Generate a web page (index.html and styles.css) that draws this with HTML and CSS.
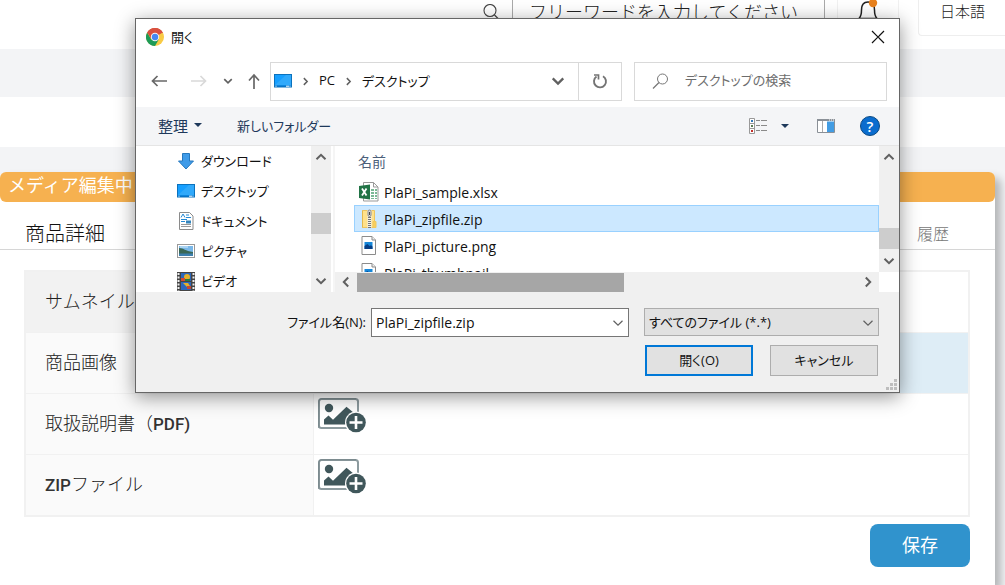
FILE: index.html
```html
<!DOCTYPE html>
<html lang="ja">
<head>
<meta charset="utf-8">
<title>メディア編集</title>
<meta name="viewport" content="width=device-width, initial-scale=1">
<link rel="stylesheet" href="styles.css">
</head>
<body>
<svg class="defs" aria-hidden="true">
  <symbol id="desktop" viewBox="0 0 18 14"><rect x=".5" y=".5" width="17" height="12.5" fill="#169fff" stroke="#0b72bd"/><path d="M1 11 12 1h5v10z" fill="#30a9fb"/><path d="M1 12.2h16" stroke="#0872c4" stroke-width="1.5"/><path d="M1.500 12.2h1M12 12.2h3M15.500 12.2h1" stroke="#fff"/></symbol>
  <symbol id="chev" viewBox="0 0 12 12"><path d="M1.500 3.800 6 8.200l4.500-4.400" fill="none" stroke="currentColor" stroke-width="2"/></symbol>
  <symbol id="thin" viewBox="0 0 12 12"><path d="M1.500 3.800 6 8.200l4.500-4.400" fill="none" stroke="currentColor" stroke-width="1.200"/></symbol>
  <symbol id="addimg" viewBox="0 0 48 36"><rect x="1" y="1" width="39" height="29" rx="2.500" fill="#fff" stroke="#8d9b9f" stroke-width="2"/><path d="M.8 30V3.500A2.700 2.700 0 0 1 3.500.8H38" fill="none" stroke="#758589" stroke-width="1"/><circle cx="11" cy="10" r="4.200" fill="#40575b"/><path d="M6 26.500v-5l4.500-4 4.500 4.200 13.500-13L36 15v11.500z" fill="#40575b"/><circle cx="38" cy="24.500" r="11" fill="#fff"/><circle cx="38" cy="24.500" r="9.800" fill="#40575b"/><path d="M38 18v13M31.500 24.500h13" stroke="#fff" stroke-width="2.600"/></symbol>
  <symbol id="png" viewBox="0 0 16 19"><path d="M1 .5h10L14.500 4v14.500H1z" fill="#fff" stroke="#8b8b8b"/><path d="M11 .5V4h3.500" fill="#eee" stroke="#8b8b8b"/><rect x="3.500" y="6" width="8" height="7" fill="#1687d9"/><path d="M3.500 13v-3l3-2 2 2 1.500-.8 1.500 1.300V13z" fill="#063e86"/></symbol>
</svg>

<header class="site-header">
  <div class="search-mark"><svg width="18" height="18" viewBox="0 0 18 18"><circle cx="8" cy="6.500" r="6" fill="none" stroke="#444" stroke-width="1.100"/><path d="m12.500 11 5 5" stroke="#444" stroke-width="1.200"/></svg></div>
  <input class="site-search" type="text" aria-label="フリーワード検索" placeholder="フリーワードを入力してください">
  <button class="bell" aria-label="お知らせ"><svg width="22" height="24" viewBox="0 0 22 24"><path d="M2 20.500c2-2 2.500-4 2.500-8.500C4.500 6.500 7 4 11 4s6.500 2.500 6.500 8c0 4.500.5 6.500 2.500 8.500z" fill="#fff" stroke="#222" stroke-width="1.500"/><circle cx="16" cy="5" r="4.200" fill="#e8821e"/></svg></button>
  <button class="lang"><span>日本語</span><svg width="10" height="10"><use href="#thin"/></svg></button>
</header>
<div class="band"></div>
<div class="subhead"></div>

<main class="main">
  <section class="card">
    <div class="status">メディア編集中</div>
    <nav class="tabs"><a class="tab active" href="#detail">商品詳細</a><a class="tab" href="#history">履歴</a></nav>
    <div class="body">
      <table class="media">
        <tr class="first"><th scope="row">サムネイル</th><td></td></tr>
        <tr class="picked"><th scope="row">商品画像</th><td></td></tr>
        <tr><th scope="row">取扱説明書（<b>PDF)</b></th><td><button class="add" aria-label="PDFを追加"><svg width="48" height="36"><use href="#addimg"/></svg></button></td></tr>
        <tr><th scope="row"><b>ZIP</b>ファイル</th><td><button class="add" aria-label="ZIPを追加"><svg width="48" height="36"><use href="#addimg"/></svg></button></td></tr>
      </table>
      <button class="save">保存</button>
    </div>
  </section>
</main>

<div class="dialog" role="dialog" aria-label="開く">
  <div class="titlebar">
    <svg width="18" height="18" viewBox="0 0 18 18"><circle cx="9" cy="9" r="9" fill="#f9cb45"/><path d="M9 9 1.200 4.500A9 9 0 0 1 16.800 4.500z" fill="#d95040"/><path d="M1.200 4.500A9 9 0 0 0 9 18l3.900-6.800L9 13 5.100 11.200z" fill="#1e9b57"/><path d="M9 5h7.900A9 9 0 0 0 1.200 4.500L5.200 11z" fill="#d95040"/><circle cx="9" cy="9" r="4.200" fill="#f4f4f4"/><circle cx="9" cy="9" r="3.200" fill="#4587f3"/></svg>
    <span class="title">開く</span>
    <button class="close" aria-label="閉じる"><svg width="14" height="14" viewBox="0 0 14 14"><path d="m1 1 12 12M13 1 1 13" stroke="#111" stroke-width="1.200"/></svg></button>
  </div>
  <div class="navrow">
    <div class="arrows">
      <button aria-label="戻る"><svg width="18" height="18" viewBox="0 0 18 18"><path d="M17 9H2.500M7.500 4l-5 5 5 5" fill="none" stroke="#686868" stroke-width="1.700"/></svg></button>
      <button aria-label="進む"><svg width="18" height="18" viewBox="0 0 18 18"><path d="M1 9h14.500M10.500 4l5 5-5 5" fill="none" stroke="#d9d9d9" stroke-width="1.700"/></svg></button>
      <button aria-label="履歴"><svg width="10" height="10"><use href="#chev"/></svg></button>
      <button aria-label="上へ"><svg width="14" height="18" viewBox="0 0 14 18"><path d="M7 17V3M2 8.500l5-5.500 5 5.500" fill="none" stroke="#686868" stroke-width="1.700"/></svg></button>
    </div>
    <div class="address">
      <svg class="pc" width="18" height="14"><use href="#desktop"/></svg>
      <svg class="right" width="9" height="9"><use href="#chev"/></svg>
      <span class="crumb">PC</span>
      <svg class="right" width="9" height="9"><use href="#chev"/></svg>
      <span class="crumb">デスクトップ</span>
      <button class="drop" aria-label="以前の場所"><svg width="14" height="14"><use href="#chev"/></svg></button>
      <button class="refresh" aria-label="更新"><svg width="16" height="16" viewBox="0 0 16 16"><path d="M11 3.200A6 6 0 1 1 4.500 3.500" fill="none" stroke="#747474" stroke-width="1.900"/><path d="M2 2h4.500v4.500" fill="none" stroke="#747474" stroke-width="1.700"/></svg></button>
    </div>
    <label class="find"><svg width="17" height="17" viewBox="0 0 17 17"><circle cx="10.500" cy="6" r="5" fill="none" stroke="#777"/><path d="m7 9.500-6 6" stroke="#777" stroke-width="1.200"/></svg><input type="text" aria-label="デスクトップの検索" placeholder="デスクトップの検索"></label>
  </div>
  <div class="tools">
    <button class="tool">整理<svg width="8" height="4" viewBox="0 0 8 4"><path d="M0 0h8L4 4z" fill="#1e395b"/></svg></button>
    <button class="tool">新しいフォルダー</button>
    <button class="tool views" aria-label="表示方法"><svg width="18" height="16" viewBox="0 0 18 16"><path d="M.5.500h5v15h-5zM.5 5.500h5M.5 10.500h5" fill="#fff" stroke="#999"/><path d="M2 3h2" stroke="#3579b8" stroke-width="2"/><path d="M2 8h2" stroke="#5c7c53" stroke-width="2"/><path d="M2 13h2" stroke="#c3302b" stroke-width="2"/><path d="M7 2.500h4M12 2.500h6M7 7.500h4M12 7.500h6M7 12.500h4M12 12.500h6" stroke="#8a8a8a"/></svg><svg width="8" height="4" viewBox="0 0 8 4"><path d="M0 0h8L4 4z" fill="#1e395b"/></svg></button>
    <button class="tool preview" aria-label="プレビュー"><svg width="18" height="14" viewBox="0 0 18 14"><path d="M.5.500h17v13H.5z" fill="#fff" stroke="#8a9097"/><path d="M0 1h18" stroke="#8a9097" stroke-width="2"/><path d="M5.500 2v11" stroke="#aaa"/><path d="M10 2.500h7V13h-7z" fill="#429ce3"/><path d="M12 1h1M14 1h1M16 1h1" stroke="#fff"/></svg></button>
    <button class="help" aria-label="ヘルプ">?</button>
  </div>
  <div class="content">
    <ul class="tree">
      <li><svg width="18" height="18" viewBox="0 0 18 18"><path d="M5.500 1.500h7V9h4L9 17 1.500 9h4z" fill="#3f9be8" stroke="#2678be"/></svg><span>ダウンロード</span></li>
      <li><svg width="18" height="14"><use href="#desktop"/></svg><span>デスクトップ</span></li>
      <li><svg width="18" height="18" viewBox="0 0 18 18"><path d="M2.500.500h10L16 4v13.500H2.500z" fill="#fff" stroke="#8b8b8b"/><path d="M4 5.500 6 2l2 3.500M9 3h3M9 5.500h5M4 7.500h6M4 9.500h4" fill="none" stroke="#2489d4"/><path d="M9 8.500h5v3H9z" fill="#3484bb"/><path d="M4 12.500h10M4 14.500h10" stroke="#999"/></svg><span>ドキュメント</span></li>
      <li><svg width="18" height="14" viewBox="0 0 18 14"><rect x=".5" y=".5" width="17" height="13" fill="#fff" stroke="#999"/><path d="M2 2h14v10H2z" fill="#7ab8e9"/><path d="M2 4c5 0 6 3 14 4v2H2z" fill="#3b6856"/><path d="M2 9.500h14V12H2z" fill="#3d7fae"/><path d="M3 3h8" stroke="#d9effc"/></svg><span>ピクチャ</span></li>
      <li><svg width="18" height="19" viewBox="0 0 18 19"><path d="M0 0h18v19H0z" fill="#444"/><path d="M1.500 1v18M16.500 1v18" stroke="#eee" stroke-width="2" stroke-dasharray="2 1.500"/><path d="M4 1h10v8H4zM4 10h10v8H4z" fill="#2c68bc"/><circle cx="10" cy="5" r="3" fill="#e4b22b"/><path d="M4 6h4v3H4z" fill="#d34b30"/><path d="M8 7h5v2H8z" fill="#267d43"/><path d="M6 11h5l2 3-3 1z" fill="#e4b22b"/><path d="M10 14h4v3h-4z" fill="#c54733"/></svg><span>ビデオ</span></li>
    </ul>
    <div class="vbar tree-bar"><svg class="up" width="12" height="12"><use href="#chev"/></svg><i class="thumb"></i><svg width="12" height="12"><use href="#chev"/></svg></div>
    <div class="split"></div>
    <div class="files">
      <div class="listing">
        <div class="colhead">名前</div>
        <div class="file"><svg width="20" height="20" viewBox="0 0 20 20"><path d="M4.500.500h10L19 5v14H4.500z" fill="#fff" stroke="#999"/><path d="M14.500.500V5H19" fill="none" stroke="#999"/><path d="M12 7h3v2h-3zM16 7h2v2h-2zM12 10h3v2h-3zM16 10h2v2h-2zM12 13h3v2h-3zM16 13h2v2h-2zM12 16h3v1h-3zM16 16h2v1h-2z" fill="#7bb895"/><path d="M0 4 11 2.500v15L0 16z" fill="#217346"/><path d="m3 6.500 4.500 7M7.500 6.500l-4.500 7" stroke="#fff" stroke-width="1.800"/></svg><span>PlaPi_sample.xlsx</span></div>
        <div class="file selected"><svg width="20" height="20" viewBox="0 0 20 20"><path d="M3.500 1.500h12v17h-12z" fill="#ffe18a" stroke="#edc45f"/><path d="M14 12.500h3v6h-3z" fill="#f8cf5e" stroke="#f0c860"/><path d="M3.500 1.500v17" stroke="#e3b84e"/><path d="M10.500 1v18" stroke="#f3f0e6" stroke-width="4"/><path d="M10.500 8v11" stroke="#777" stroke-width="3" stroke-dasharray="1 1"/><rect x="9" y="1" width="3" height="6.500" rx="1.500" fill="#ddd" stroke="#888"/><path d="M10.500 3v3" stroke="#444"/></svg><span>PlaPi_zipfile.zip</span></div>
        <div class="file"><svg width="20" height="19"><use href="#png"/></svg><span>PlaPi_picture.png</span></div>
        <div class="file"><svg width="20" height="19"><use href="#png"/></svg><span>PlaPi_thumbnail</span></div>
      </div>
      <div class="vbar file-bar"><svg class="up" width="12" height="12"><use href="#chev"/></svg><i class="thumb"></i><svg width="12" height="12"><use href="#chev"/></svg></div>
      <div class="hbar"><svg class="left" width="12" height="12"><use href="#chev"/></svg><i class="hthumb"></i><svg class="right" width="12" height="12"><use href="#chev"/></svg></div>
    </div>
  </div>
  <div class="footer">
    <label for="fname">ファイル名(N):</label>
    <div class="combo"><input id="fname" type="text" value="PlaPi_zipfile.zip"><svg width="12" height="12"><use href="#thin"/></svg></div>
    <div class="choices">
      <div class="combo kind"><select aria-label="ファイルの種類"><option>すべてのファイル (*.*)</option></select><svg width="12" height="12"><use href="#thin"/></svg></div>
      <div class="actions"><button class="btn primary">開く(O)</button><button class="btn">キャンセル</button></div>
    </div>
  </div>
  <svg class="grip" width="11" height="11" viewBox="0 0 11 11"><path d="M8 0h3v3H8zM4 4h3v3H4zM8 4h3v3H8zM0 8h3v3H0zM4 8h3v3H4zM8 8h3v3H8z" fill="#bdbdbd"/></svg>
</div>
</body>
</html>
```
FILE: styles.css
```css
* { box-sizing: border-box; }
body {
  margin: 0;
  min-height: 100vh;
  display: flex;
  flex-direction: column;
  overflow: hidden;
  position: relative;
  background: #fff;
  color: #222;
  font-family: Roboto, "Noto Sans CJK JP", sans-serif;
  font-weight: 300;
}
button, input, select { font: inherit; color: inherit; margin: 0; padding: 0; border: 0; background: none; border-radius: 0; }
input { min-width: 0; outline: 0; }
svg { display: block; flex: none; }
a { text-decoration: none; color: inherit; }
.defs { position: absolute; width: 0; height: 0; }

.site-header { display: flex; align-items: flex-start; justify-content: flex-end; height: 49px; }
.search-mark { padding: 4px 12px 0 0; height: 36px; border-right: 1px solid #aaa; }
.site-search { width: 312px; height: 36px; padding: 0 16px 12px; border-right: 1px solid #aaa; font-size: 18px; }
.site-search::placeholder { color: #222; opacity: 1; }
.bell { width: 62px; height: 36px; margin: 0 19px 0 12px; border: solid #f1f1f1; border-width: 0 1px; display: flex; justify-content: center; }
.bell svg { margin-top: -2px; }
.lang { width: 87px; height: 36px; padding: 0 0 14px 21px; border: solid #eee; border-width: 0 0 1px 1px; border-bottom-left-radius: 4px; display: flex; align-items: center; gap: 20px; font-size: 15px; overflow: hidden; white-space: nowrap; }
.band { height: 48px; background: #f3f4f6; }
.subhead { height: 50px; }

.main { flex: 1; padding: 25px 10px 0 0; background: #f3f4f6; display: flex; }
.card { flex: 1; background: #fff; border-radius: 6px 6px 0 0; box-shadow: 6px 6px 8px #b4b6b8; }
.status { height: 30px; line-height: 28px; padding-left: 8px; border-radius: 6px; background: #f6b150; color: #fff; font-size: 18px; font-weight: 400; }
.tabs { height: 48px; padding: 14px 46px 0 25px; border-bottom: 1px solid #d6d6d6; display: flex; justify-content: space-between; align-items: center; }
.tab { color: #777; font-size: 16px; }
.tab.active { color: #111; font-size: 20px; }
.body { padding: 20px 25px 0 24px; display: flex; flex-direction: column; align-items: flex-end; gap: 7px; }
.media { width: 100%; border-collapse: separate; border-spacing: 0; border: 2px solid #f1f1f1; }
.media th { width: 288px; height: 61px; padding: 0 0 4px 19px; text-align: left; font-size: 18px; font-weight: 300; background: #fafafa; border: solid #f1f1f1; border-width: 0 1px 1px 0; }
.media b { font-size: 17px; font-weight: 500; color: #333; }
.media td { padding: 4px; vertical-align: top; border-bottom: 1px solid #f1f1f1; }
.media tr:last-child > * { border-bottom: 0; }
.media tr:last-child th { height: 60px; }
.media .first th { background: #f2f2f2; }
.picked td { background: #deedf6; }
.save { width: 100px; height: 43px; padding-bottom: 4px; border-radius: 8px; background: #3093cd; color: #fff; font-size: 18px; font-weight: 400; }

.dialog {
  position: absolute; top: 18px; left: 135px; right: 105px; height: 375px;
  display: flex; flex-direction: column;
  border: 1px solid #666; background: #fff; color: #111;
  box-shadow: 0 4px 18px rgba(0, 0, 0, .42);
  font: 400 13px "Open Sans", "Noto Sans CJK JP", sans-serif;
  font-feature-settings: "palt";
}
.dialog svg { color: #606060; }
.titlebar { display: flex; align-items: center; gap: 7px; height: 36px; padding: 0 14px 0 10px; }
.title, .crumb, .tree span { padding-bottom: 2px; }
.close { margin-left: auto; }
.navrow { display: flex; align-items: center; height: 52px; padding: 0 12px 0 14px; }
.arrows { display: flex; align-items: center; justify-content: space-between; width: 111px; margin-right: 9px; }
.arrows button:nth-child(2) { margin-left: 8px; }
.address { flex: 1; height: 39px; display: flex; align-items: center; border: 1px solid #d9d9d9; gap: 9px; padding-left: 3px; }
.right { transform: rotate(-90deg); }
.up { transform: rotate(180deg); }
.left { transform: rotate(90deg); }
.drop { margin-left: auto; }
.refresh { width: 43px; height: 100%; border-left: 1px solid #d9d9d9; display: grid; place-items: center; margin-left: 4px; }
.find { width: 253px; height: 39px; margin-left: 12px; padding-left: 17px; display: flex; align-items: center; gap: 16px; border: 1px solid #d9d9d9; }
.find input { padding-bottom: 2px; }
.find input::placeholder { color: #6d6d6d; opacity: 1; }
.tools { height: 39px; padding: 0 19px 0 22px; display: flex; align-items: center; background: #f4f5f7; border-bottom: 1px solid #e5e5e5; color: #1e395b; }
.tool { display: flex; align-items: center; gap: 6px; margin-right: 35px; padding-bottom: 2px; }
.tool:first-child { font-size: 15px; }
.views { margin: 0 28px 0 auto; gap: 14px; padding: 0; }
.preview { margin-right: 25px; padding: 0; }
.help { width: 20px; height: 20px; border-radius: 50%; border: 1px solid #0b4a83; background: #0a6cce; color: #fff; font-size: 15px; line-height: 16px; font-weight: 600; }
.content { display: flex; flex: 1; min-height: 0; }
.tree { width: 175px; margin: 0; padding: 0 0 0 41px; list-style: none; overflow: hidden; }
.tree li { height: 30px; display: flex; align-items: center; gap: 6px; }
.vbar { display: flex; flex-direction: column; align-items: center; justify-content: space-between; padding: 5px 0; width: 20px; background: #f0f0f0; }
.thumb { width: 20px; height: 21px; background: #cdcdcd; }
.tree-bar .thumb { margin-top: 8px; }
.file-bar .thumb { margin-top: 58px; }
.split { width: 4px; border-right: 2px solid #f5f5f5; }
.files { flex: 1; display: grid; grid-template: 1fr 20px / 1fr 20px; min-width: 0; min-height: 0; }
.listing { overflow: hidden; min-height: 0; padding-left: 19px; }
.colhead { height: 32px; padding: 0 0 0 4px; line-height: 32px; color: #4c607a; font-size: 14px; }
.file { height: 27px; padding-left: 5px; display: flex; align-items: center; gap: 5px; font-size: 14px; }
.file span { padding-top: 2px; }
.file.selected { background: #cce8ff; outline: 1px solid #99d1ff; outline-offset: -1px; }
.hbar { display: flex; align-items: center; gap: 5px; padding: 0 5px; background: #f0f0f0; }
.hthumb { width: 50%; height: 19px; background: #a6a6a6; margin-right: auto; }
.footer { height: 100px; padding: 16px 20px 0 0; display: flex; justify-content: flex-end; align-items: flex-start; background: #f0f0f0; }
.footer label { line-height: 29px; margin-right: 5px; }
.combo { position: relative; width: 258px; height: 29px; margin-right: 15px; border: 1px solid #767676; background: #fff; }
.combo input, .combo select { width: 100%; height: 100%; padding: 0 24px 0 4px; appearance: none; outline: 0; }
.combo input { font-size: 14px; }
.combo svg { position: absolute; right: 4px; top: 8px; pointer-events: none; }
.choices { width: 235px; }
.combo.kind { width: 100%; height: 28px; margin: 0 0 9px; background: #e1e1e1; border-color: #adadad; }
.actions { display: flex; justify-content: space-between; padding: 0 1px; }
.btn { width: 108px; height: 31px; padding-bottom: 2px; border: 1px solid #adadad; background: #e1e1e1; }
.btn.primary { border: 2px solid #0078d7; }
.grip { position: absolute; right: 2px; bottom: 2px; }
```
